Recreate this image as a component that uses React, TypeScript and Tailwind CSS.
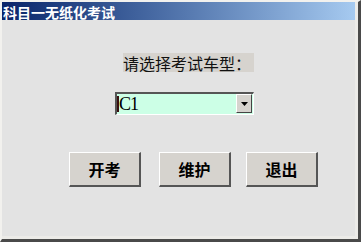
const cjk = "font-['Noto_Sans_CJK_SC','Noto_Sans',sans-serif]";

function ExamButton({ label, className = "" }: { label: string; className?: string }) {
  return (
    <button
      className={`w-[72px] h-[35px] bg-[#d6d3ce] border-t-[1px] border-l-[1px] border-t-white border-l-white border-r-[2px] border-b-[2px] border-r-[#555] border-b-[#555] flex items-center justify-center text-[16px] font-bold text-black leading-none ${cjk} ${className}`}
    >
      {label}
    </button>
  );
}

export default function App() {
  return (
    <div className="w-[361px] h-[242px] flex flex-col bg-[#ecebe8] border-t-2 border-l-2 border-t-[#f2f1ee] border-l-[#f2f1ee] border-r-[3px] border-b-[3px] border-r-[#4a4a4a] border-b-[#4a4a4a]">
      {/* title bar */}
      <div className="h-[18px] mr-[3px] flex items-center bg-linear-to-r from-[#0a246a] to-[#a6caf0]">
        <span className={`pl-[1px] pt-[1px] text-white text-[14px] font-bold leading-none ${cjk}`}>
          科目一无纸化考试
        </span>
      </div>

      {/* body */}
      <div className="flex-1 mr-[3px] mb-[3px] bg-[#e3e3e3] flex flex-col">
        <div className="mt-[33px] ml-[121px] w-[131px] h-[19px] bg-[#d6d3ce] flex items-center">
          <span className={`text-[16px] text-[#111] leading-none ${cjk}`}>请选择考试车型：</span>
        </div>

        {/* select */}
        <div className="mt-[20px] ml-[113px] w-[139px] h-[23px] flex border-t-2 border-l-2 border-t-[#555] border-l-[#555] border-r-[1px] border-b-[1px] border-r-white border-b-white bg-[#ccffe6]">
          <div className="flex-1 flex items-center relative">
            <span className="absolute left-[0px] top-[2px] w-[2px] h-[16px] bg-[#3a1010]" />
            <span className="pl-[2px] text-[18px] leading-none text-black font-['Liberation_Serif',serif] tracking-[-1px]">
              C1
            </span>
          </div>
          <div className="w-[16px] h-[19px] mr-[1px] bg-[#d6d3ce] border-t-[1px] border-l-[1px] border-t-white border-l-white border-r-[1px] border-b-[1px] border-r-[#444] border-b-[#444] flex items-center justify-center">
            <svg width="7" height="4" viewBox="0 0 7 4">
              <polygon points="0,0 7,0 3.5,4" fill="#000" />
            </svg>
          </div>
        </div>

        {/* buttons */}
        <div className="mt-[37px] ml-[67px] flex">
          <ExamButton label="开考" />
          <ExamButton label="维护" className="ml-[18px]" />
          <ExamButton label="退出" className="ml-[15px]" />
        </div>
      </div>
    </div>
  );
}
